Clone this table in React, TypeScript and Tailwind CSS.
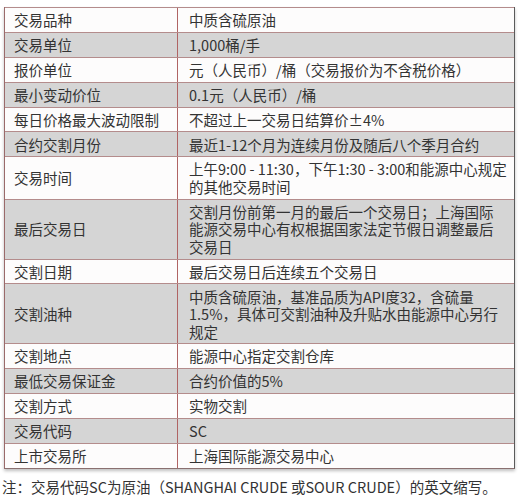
import React from "react";

type Row = { label: string; value: React.ReactNode };

const rows: Row[] = [
  { label: "交易品种", value: "中质含硫原油" },
  { label: "交易单位", value: "1,000桶/手" },
  { label: "报价单位", value: "元（人民币）/桶（交易报价为不含税价格）" },
  { label: "最小变动价位", value: "0.1元（人民币）/桶" },
  { label: "每日价格最大波动限制", value: "不超过上一交易日结算价±4%" },
  { label: "合约交割月份", value: "最近1-12个月为连续月份及随后八个季月合约" },
  {
    label: "交易时间",
    value: (
      <>
        上午9:00 - 11:30，下午1:30 - 3:00和能源中心规定
        <br />
        的其他交易时间
      </>
    ),
  },
  {
    label: "最后交易日",
    value: (
      <>
        交割月份前第一月的最后一个交易日；上海国际
        <br />
        能源交易中心有权根据国家法定节假日调整最后
        <br />
        交易日
      </>
    ),
  },
  { label: "交割日期", value: "最后交易日后连续五个交易日" },
  {
    label: "交割油种",
    value: (
      <>
        中质含硫原油，基准品质为API度32，含硫量
        <br />
        1.5%，具体可交割油种及升贴水由能源中心另行
        <br />
        规定
      </>
    ),
  },
  { label: "交割地点", value: "能源中心指定交割仓库" },
  { label: "最低交易保证金", value: "合约价值的5%" },
  { label: "交割方式", value: "实物交割" },
  { label: "交易代码", value: "SC" },
  { label: "上市交易所", value: "上海国际能源交易中心" },
];

export default function App() {
  return (
    <div
      className="w-[520px] h-[500px] bg-white overflow-hidden text-[#333333]"
      style={{ fontFamily: '"Noto Sans CJK SC", "Noto Sans", sans-serif' }}
    >
      <div className="ml-[4px] mt-[7px] w-[511px] border-l border-l-[#9a6a6a] border-r border-r-[#5a5a5a] border-b border-b-[#8a7070] shadow-[0_2px_3px_rgba(0,0,0,0.25)]">
        {rows.map((r, i) => (
          <div
            key={r.label}
            className={`flex border-t border-[#b48c8c] text-[14.5px] leading-[17.5px] ${
              i % 2 === 1 ? "bg-[#d5d5d5]" : "bg-[#fdfcfc]"
            }`}
          >
            <div className="w-[173px] shrink-0 flex items-center px-[9px] py-[3.2px] border-r border-[#b06464] whitespace-nowrap">
              {r.label}
            </div>
            <div className="flex-1 px-[11px] py-[3.2px] whitespace-nowrap">{r.value}</div>
          </div>
        ))}
      </div>
      <div className="mt-[8px] pl-[2px] text-[14.5px] leading-[20px] whitespace-nowrap">
        注：交易代码SC为原油（SHANGHAI CRUDE 或SOUR CRUDE）的英文缩写。
      </div>
    </div>
  );
}
